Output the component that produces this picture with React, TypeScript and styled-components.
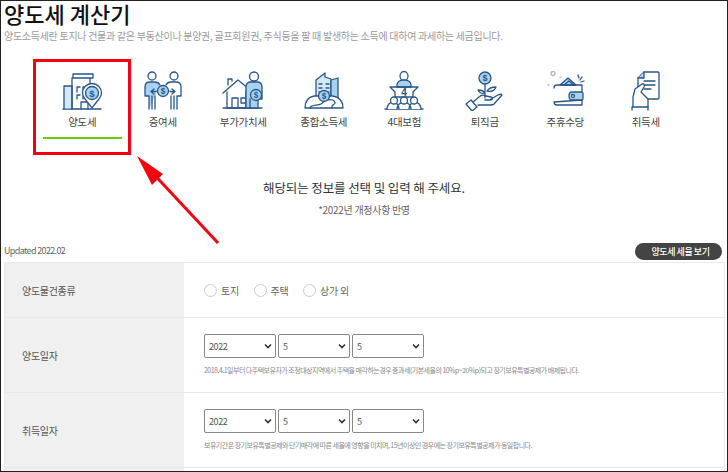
import React from 'react';
import styled, { createGlobalStyle } from 'styled-components';

const LINE = '#2a5687';
const SOFT = '#a8d2f0';

const CHEVRON =
  "data:image/svg+xml,%3Csvg xmlns='http://www.w3.org/2000/svg' width='8' height='6'%3E%3Cpath d='M1 1.500l3 3 3-3' fill='none' stroke='%23333' stroke-width='1.600'/%3E%3C/svg%3E";

const GlobalStyle = createGlobalStyle`
  html, body {
    margin: 0;
    padding: 0;
    background: #fff;
  }
`;

const Frame = styled.div`
  position: relative;
  box-sizing: border-box;
  width: 728px;
  height: 472px;
  overflow: hidden;
  border: 1px solid #222;
  padding: 0 3px;
  background: #fff;
  color: #444;
  font-family: 'Noto Sans CJK KR', 'Noto Sans', sans-serif;
`;

const Title = styled.h1`
  margin: 0;
  height: 26px;
  line-height: 24px;
  color: #111;
  font-size: 22px;
  font-weight: 500;
`;

const Lead = styled.p`
  margin: 1px 0 0 0;
  height: 16px;
  line-height: 16px;
  letter-spacing: -0.28px;
  white-space: nowrap;
  color: #9a9a9a;
  font-size: 10px;
`;

const TabRow = styled.div`
  display: flex;
  margin-top: 27px;
  padding-left: 38px;
`;

const Tab = styled.div`
  position: relative;
  display: flex;
  flex-direction: column;
  flex: none;
  align-items: center;
  width: 80.5px;
`;

const TabIcon = styled.svg`
  display: block;
  width: 44px;
  height: 40px;
`;

const TabLabel = styled.span`
  margin-top: 1px;
  line-height: 20px;
  letter-spacing: -0.3px;
  color: #444;
  font-size: 10.5px;
`;

const ActiveLine = styled.div<{ $on: boolean }>`
  margin-top: 5px;
  background: ${(p) => (p.$on ? '#66cc00' : 'transparent')};
  width: 79px;
  height: 2px;
`;

const RedMark = styled.div`
  position: absolute;
  top: -12px;
  left: -9px;
  box-sizing: border-box;
  border: 3px solid #f5000f;
  width: 98px;
  height: 96px;
`;

const Notice = styled.div`
  display: flex;
  flex-direction: column;
  align-items: center;
  margin-top: 39px;
`;

const NoticeMain = styled.p`
  margin: 0;
  line-height: 20px;
  letter-spacing: -0.1px;
  color: #333;
  font-size: 12.5px;
`;

const NoticeSub = styled.p`
  margin: 4px 0 0 0;
  line-height: 16px;
  letter-spacing: -0.3px;
  color: #666;
  font-size: 10px;
`;

const MetaRow = styled.div`
  display: flex;
  align-items: flex-end;
  justify-content: space-between;
  margin-top: 25px;
  padding-right: 2px;
`;

const Updated = styled.span`
  margin-bottom: 2px;
  line-height: 14px;
  letter-spacing: -0.65px;
  color: #666;
  font-size: 9px;
`;

const RateButton = styled.button`
  box-sizing: border-box;
  margin: 0;
  border: 0;
  border-radius: 9px;
  background: #444;
  padding: 0 0 0 4px;
  width: 87px;
  height: 17px;
  line-height: 17px;
  letter-spacing: -0.45px;
  color: #fff;
  font-family: inherit;
  font-size: 9px;
  font-weight: 500;
`;

const FormTable = styled.div`
  margin-top: 2px;
  border: 1px solid #eaeaea;
  width: 719px;
`;

const FormRow = styled.div<{ $tall?: boolean }>`
  display: flex;
  border-bottom: 1px solid #e8e8e8;
  height: ${(p) => (p.$tall ? '74px' : '54px')};
`;

const RowHead = styled.div`
  display: flex;
  flex: none;
  align-items: center;
  background: #f0f0f0;
  padding-left: 17px;
  width: 162px;
  letter-spacing: -0.3px;
  color: #555;
  font-size: 10px;
`;

const RowBody = styled.div`
  display: flex;
  flex-direction: column;
  justify-content: center;
  padding-left: 20px;
`;

const RadioGroup = styled.div`
  display: flex;
  gap: 14.5px;
`;

const RadioItem = styled.label`
  display: flex;
  align-items: center;
  gap: 4px;
  letter-spacing: -0.2px;
  color: #666;
  font-size: 10px;
`;

const RadioDot = styled.span`
  box-sizing: border-box;
  border: 1px solid #ccc;
  border-radius: 50%;
  background: #fff;
  width: 13px;
  height: 13px;
`;

const SelectRow = styled.div`
  display: flex;
  gap: 2px;
`;

const DateSelect = styled.select`
  appearance: none;
  box-sizing: border-box;
  margin: 0;
  border: 1px solid #888;
  border-radius: 2px;
  background: #fff url("${CHEVRON}") no-repeat right 3px center;
  padding: 0 0 0 4px;
  width: 72px;
  height: 24px;
  letter-spacing: -0.4px;
  color: #555;
  font-family: inherit;
  font-size: 9px;
`;

const Hint = styled.p`
  margin: 6px 0 0 0;
  height: 12px;
  line-height: 12px;
  letter-spacing: -0.52px;
  white-space: nowrap;
  color: #888;
  font-size: 7px;
`;

const Arrow = styled.svg`
  position: absolute;
  top: -1px;
  left: -1px;
  width: 728px;
  height: 472px;
  pointer-events: none;
`;

const Draw = styled.g`
  fill: none;
  stroke: ${LINE};
  stroke-width: 1.3;
  stroke-linecap: round;
  stroke-linejoin: round;
`;

const Coin = ({ x, y, r }: { x: number; y: number; r: number }) => (
  <g>
    <circle cx={x} cy={y} r={r} fill={SOFT} />
    <text x={x} y={y + r * 0.55} textAnchor='middle' fontSize={r * 1.5} fill={LINE} stroke='none' fontWeight='700' fontFamily='Liberation Sans, sans-serif'>
      $
    </text>
  </g>
);

const BuildingIcon = () => (
  <Draw>
    <path d='M3 38h38' />
    <path d='M4 38V15h8v23' fill={SOFT} fillOpacity={0.5} />
    <path d='M12 38V7h18v8M13 3h20v4H13z' />
    <path d='M17 21v-5h3M23 21v-5h3M17 28v-4h3M23 28v-3' />
    <path d='M21 38v-7h7v7' />
    <path d='M32 37c-4-6-9.500-10-9.500-15a9.500 9.500 0 0 1 19 0c0 5-5.500 9-9.500 15z' fill='#fff' />
    <Coin x={32} y={22} r={6.500} />
  </Draw>
);

const PeopleIcon = () => (
  <Draw>
    <circle cx={11} cy={5} r={4} />
    <circle cx={33} cy={5} r={4} />
    <path d='M8 38V25H4V16c0-3 2-5 5-5h5c2 0 4 1 5 3M14 38V25M11 25v13' fill={SOFT} />
    <path d='M36 38V25h4V16c0-3-2-5-5-5h-5c-2 0-4 1-5 3M30 38V25M33 25v13' />
    <path d='M13 18l-3 2.500 3 2.500M10 20.500h5M31 18l3 2.500-3 2.500M34 20.500h-5' />
    <Coin x={22} y={20} r={5.500} />
  </Draw>
);

const HouseIcon = () => (
  <Draw>
    <path d='M2 37h39' />
    <path d='M2 22L17 9l11 9' />
    <path d='M6 21v16h19V20M11 37v-10h6v10M20 27h5v5h-5zM7 14V8h4v2' />
    <path d='M25 37V16c0-3 2-5 5-5h6c3 0 5 2 5 5v12h-4v9z' fill={SOFT} />
    <circle cx={33} cy={5.500} r={4.500} />
    <path d='M29 28v9' />
    <Coin x={35} y={24} r={5.500} />
  </Draw>
);

const CityIcon = () => (
  <Draw>
    <path d='M14 27V9l9-7v4l6 2v19' fill={SOFT} fillOpacity={0.5} />
    <path d='M29 9l7-2v20h-7z' fill={SOFT} />
    <path d='M17 13h3M24 13h3M17 17h3M24 17h3M17 21h10' />
    <path d='M3 37c0-7 4-11 9-12h19c6 1 10 5 10 12z' fill='#fff' />
    <path d='M8 37c1-4 8-2 11-4 3-1 2-4 6-4 4-1 8 0 8 3 0 2-4 1-3 5' />
    <Coin x={22} y={25} r={5.500} />
  </Draw>
);

const InsuranceIcon = () => (
  <Draw>
    <path d='M3 38h38' />
    <ellipse cx={22} cy={5} rx={4} ry={4.500} />
    <path d='M15 16v-2c0-3 3-5 7-5s7 2 7 5v2z' fill={SOFT} />
    <path d='M8 16h28l-5 5v5H13v-5z' />
    <text x={22} y={25} textAnchor='middle' fontSize={10} fill={LINE} stroke='none' fontWeight='700' fontFamily='Liberation Sans, sans-serif'>
      4
    </text>
    <path d='M5 38c0-9 12-9 12 0M15 38c0-9 14-9 14 0M27 38c0-9 12-9 12 0' fill='#fff' />
    <circle cx={12} cy={29.500} r={3.500} fill='#fff' />
    <circle cx={22} cy={29.500} r={3.500} fill='#fff' />
    <circle cx={32} cy={29.500} r={3.500} fill='#fff' />
  </Draw>
);

const PlantIcon = () => (
  <Draw>
    <path d='M22 13v14M22 22c-2-3-4-3-7-3 1 3 4 4 7 3zM24 20c2-3 5-4 9-4-1 3-4 5-9 4z' />
    <path d='M10 31l6-5c2-2 5-2 7-1l5 1c2 0 2 3 0 3h-6M28 28l7-4c2-1 4-1 4 0l-8 9c-1 1-3 1-4 1H15' />
    <path d='M3 33l5-4 6 7-5 4z' fill='#fff' />
    <Coin x={22} y={7} r={6} />
  </Draw>
);

const WalletIcon = () => (
  <Draw>
    <path d='M17 14l8-7 8 7z' fill={SOFT} />
    <path d='M21 14l5-4 5 4' />
    <path d='M11 17c0-2 1-3 3-3h25v7M39 29v5H14c-2 0-3-1-3-3z' />
    <path d='M29 21h10c1 0 1 1 1 2v4c0 1 0 2-1 2H29c-2 0-3-2-3-4s1-4 3-4z' fill={SOFT} />
    <circle cx={30} cy={25} r={1.500} fill='#fff' />
    <circle cx={10} cy={2.500} r={2} stroke='#b5b5b5' />
    <path d='M35 4l1 3M39 6l-2 3M41 10l-3 1' />
    <path d='M17 6h1M5 14h1' stroke='#b5b5b5' />
  </Draw>
);

const ContractIcon = () => (
  <Draw>
    <path d='M14 7l6-6h14c1 0 1 1 1 1v25c0 1-1 1-1 1H14z' fill='#fff' />
    <path d='M14 7h6V1' fill={SOFT} />
    <path d='M20 10h11M20 14h11M20 18h7' />
    <path d='M9 36V26l2-8 7-5c2-1 3 1 2 3l-3 5 7 7v8' fill='#fff' />
    <path d='M8 39v-3h16v3' />
  </Draw>
);

const tabs = [
  { label: '양도세', icon: <BuildingIcon /> },
  { label: '증여세', icon: <PeopleIcon /> },
  { label: '부가가치세', icon: <HouseIcon /> },
  { label: '종합소득세', icon: <CityIcon /> },
  { label: '4대보험', icon: <InsuranceIcon /> },
  { label: '퇴직금', icon: <PlantIcon /> },
  { label: '주휴수당', icon: <WalletIcon /> },
  { label: '취득세', icon: <ContractIcon /> },
];

const DateFields = () => (
  <SelectRow>
    <DateSelect defaultValue='2022'>
      <option>2022</option>
    </DateSelect>
    <DateSelect defaultValue='5'>
      <option>5</option>
    </DateSelect>
    <DateSelect defaultValue='5'>
      <option>5</option>
    </DateSelect>
  </SelectRow>
);

export default function App() {
  return (
    <Frame>
      <GlobalStyle />
      <Title>양도세 계산기</Title>
      <Lead>양도소득세란 토지나 건물과 같은 부동산이나 분양권, 골프회원권, 주식등을 팔 때 발생하는 소득에 대하여 과세하는 세금입니다.</Lead>
      <TabRow>
        {tabs.map((tab, i) => (
          <Tab key={tab.label}>
            {i === 0 && <RedMark />}
            <TabIcon viewBox='0 0 44 40'>{tab.icon}</TabIcon>
            <TabLabel>{tab.label}</TabLabel>
            <ActiveLine $on={i === 0} />
          </Tab>
        ))}
      </TabRow>
      <Notice>
        <NoticeMain>해당되는 정보를 선택 및 입력 해 주세요.</NoticeMain>
        <NoticeSub>*2022년 개정사항 반영</NoticeSub>
      </Notice>
      <MetaRow>
        <Updated>Updated 2022.02</Updated>
        <RateButton>양도세 세율 보기</RateButton>
      </MetaRow>
      <FormTable>
        <FormRow>
          <RowHead>양도물건종류</RowHead>
          <RowBody>
            <RadioGroup>
              <RadioItem>
                <RadioDot />
                토지
              </RadioItem>
              <RadioItem>
                <RadioDot />
                주택
              </RadioItem>
              <RadioItem>
                <RadioDot />
                상가 외
              </RadioItem>
            </RadioGroup>
          </RowBody>
        </FormRow>
        <FormRow $tall>
          <RowHead>양도일자</RowHead>
          <RowBody>
            <DateFields />
            <Hint>2018.4.1일부터 다주택보유자가 조정대상지역에서 주택을 매각하는경우 중과세(기본세율의 10%p~20%p)되고 장기보유특별공제가 배제됩니다.</Hint>
          </RowBody>
        </FormRow>
        <FormRow $tall>
          <RowHead>취득일자</RowHead>
          <RowBody>
            <DateFields />
            <Hint>보유기간은 장기보유특별공제와 단기매각에 따른 세율에 영향을 미치며, 15년이상인 경우에는 장기보유특별공제가 동일합니다.</Hint>
          </RowBody>
        </FormRow>
        <FormRow $tall>
          <RowHead />
        </FormRow>
      </FormTable>
      <Arrow viewBox='0 0 728 472'>
        <path d='M218 243L148 168' stroke='#f5000f' strokeWidth={3} />
        <path d='M137 156L163 174L152 185z' fill='#f5000f' />
      </Arrow>
    </Frame>
  );
}
